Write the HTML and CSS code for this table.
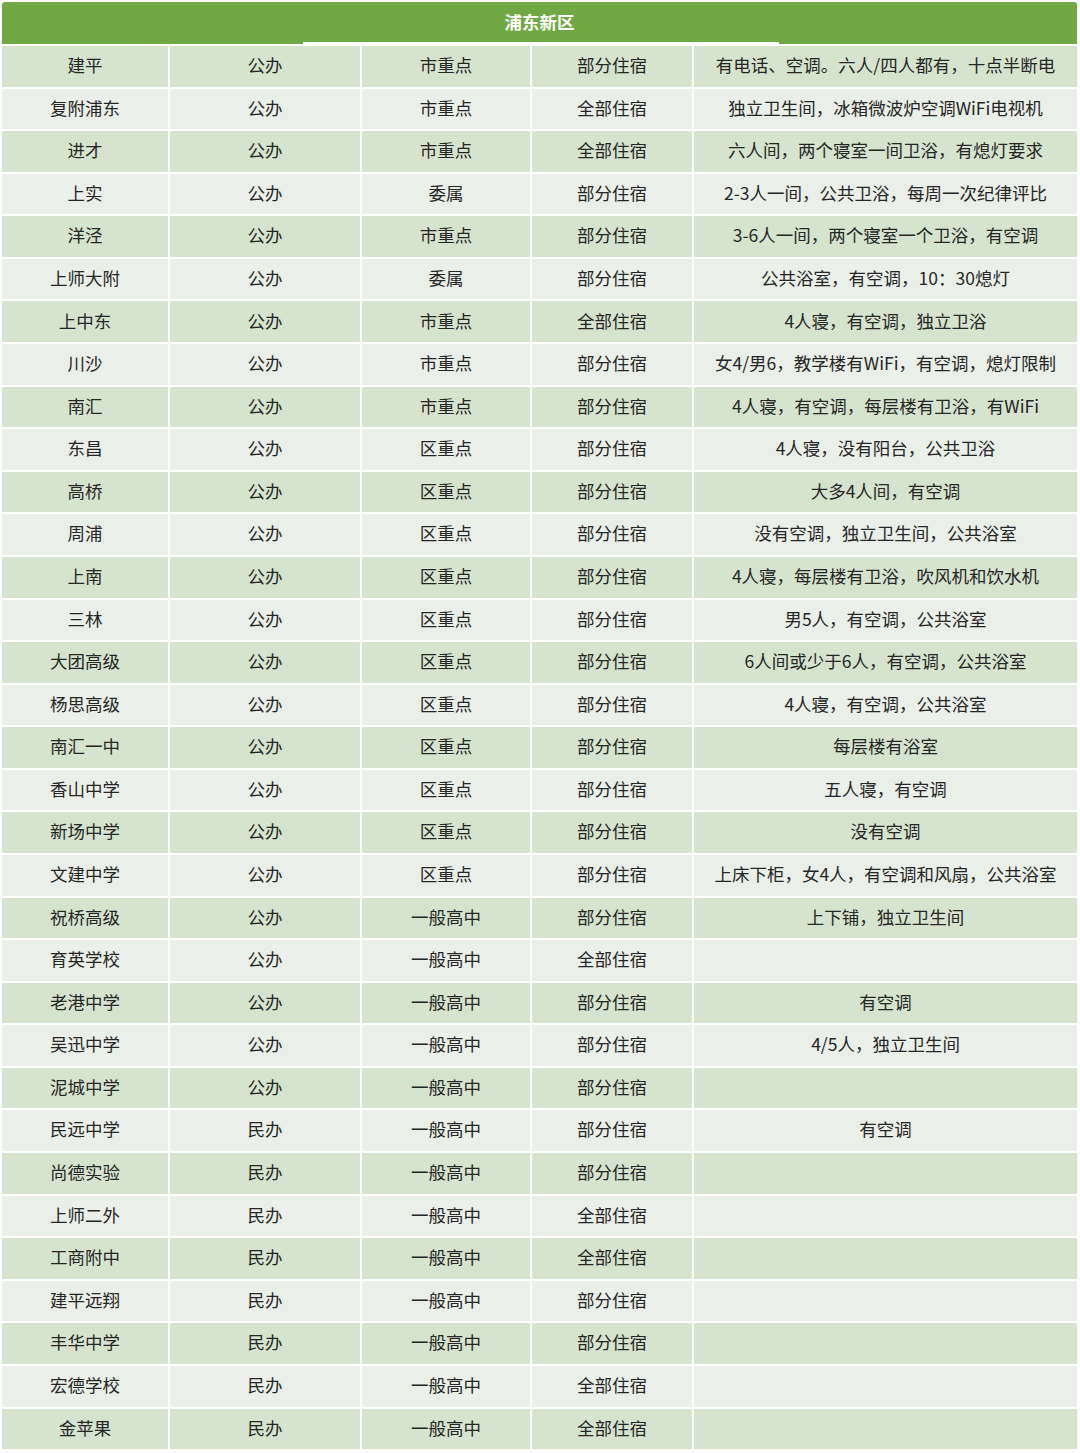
FILE: index.html
```html
<!DOCTYPE html>
<html lang="zh-CN">
<head>
<meta charset="utf-8">
<title>浦东新区</title>
<link rel="stylesheet" href="styles.css">
</head>
<body>
<table class="grid">
  <colgroup>
    <col class="c1"><col class="c2"><col class="c3"><col class="c4"><col class="c5">
  </colgroup>
  <thead>
    <tr><th colspan="5" class="title">浦东新区</th></tr>
  </thead>
  <tbody>
    <tr><td>建平</td><td>公办</td><td>市重点</td><td>部分住宿</td><td>有电话、空调。六人/四人都有，十点半断电</td></tr>
    <tr><td>复附浦东</td><td>公办</td><td>市重点</td><td>全部住宿</td><td>独立卫生间，冰箱微波炉空调WiFi电视机</td></tr>
    <tr><td>进才</td><td>公办</td><td>市重点</td><td>全部住宿</td><td>六人间，两个寝室一间卫浴，有熄灯要求</td></tr>
    <tr><td>上实</td><td>公办</td><td>委属</td><td>部分住宿</td><td>2-3人一间，公共卫浴，每周一次纪律评比</td></tr>
    <tr><td>洋泾</td><td>公办</td><td>市重点</td><td>部分住宿</td><td>3-6人一间，两个寝室一个卫浴，有空调</td></tr>
    <tr><td>上师大附</td><td>公办</td><td>委属</td><td>部分住宿</td><td>公共浴室，有空调，10：30熄灯</td></tr>
    <tr><td>上中东</td><td>公办</td><td>市重点</td><td>全部住宿</td><td>4人寝，有空调，独立卫浴</td></tr>
    <tr><td>川沙</td><td>公办</td><td>市重点</td><td>部分住宿</td><td>女4/男6，教学楼有WiFi，有空调，熄灯限制</td></tr>
    <tr><td>南汇</td><td>公办</td><td>市重点</td><td>部分住宿</td><td>4人寝，有空调，每层楼有卫浴，有WiFi</td></tr>
    <tr><td>东昌</td><td>公办</td><td>区重点</td><td>部分住宿</td><td>4人寝，没有阳台，公共卫浴</td></tr>
    <tr><td>高桥</td><td>公办</td><td>区重点</td><td>部分住宿</td><td>大多4人间，有空调</td></tr>
    <tr><td>周浦</td><td>公办</td><td>区重点</td><td>部分住宿</td><td>没有空调，独立卫生间，公共浴室</td></tr>
    <tr><td>上南</td><td>公办</td><td>区重点</td><td>部分住宿</td><td>4人寝，每层楼有卫浴，吹风机和饮水机</td></tr>
    <tr><td>三林</td><td>公办</td><td>区重点</td><td>部分住宿</td><td>男5人，有空调，公共浴室</td></tr>
    <tr><td>大团高级</td><td>公办</td><td>区重点</td><td>部分住宿</td><td>6人间或少于6人，有空调，公共浴室</td></tr>
    <tr><td>杨思高级</td><td>公办</td><td>区重点</td><td>部分住宿</td><td>4人寝，有空调，公共浴室</td></tr>
    <tr><td>南汇一中</td><td>公办</td><td>区重点</td><td>部分住宿</td><td>每层楼有浴室</td></tr>
    <tr><td>香山中学</td><td>公办</td><td>区重点</td><td>部分住宿</td><td>五人寝，有空调</td></tr>
    <tr><td>新场中学</td><td>公办</td><td>区重点</td><td>部分住宿</td><td>没有空调</td></tr>
    <tr><td>文建中学</td><td>公办</td><td>区重点</td><td>部分住宿</td><td>上床下柜，女4人，有空调和风扇，公共浴室</td></tr>
    <tr><td>祝桥高级</td><td>公办</td><td>一般高中</td><td>部分住宿</td><td>上下铺，独立卫生间</td></tr>
    <tr><td>育英学校</td><td>公办</td><td>一般高中</td><td>全部住宿</td><td></td></tr>
    <tr><td>老港中学</td><td>公办</td><td>一般高中</td><td>部分住宿</td><td>有空调</td></tr>
    <tr><td>吴迅中学</td><td>公办</td><td>一般高中</td><td>部分住宿</td><td>4/5人，独立卫生间</td></tr>
    <tr><td>泥城中学</td><td>公办</td><td>一般高中</td><td>部分住宿</td><td></td></tr>
    <tr><td>民远中学</td><td>民办</td><td>一般高中</td><td>部分住宿</td><td>有空调</td></tr>
    <tr><td>尚德实验</td><td>民办</td><td>一般高中</td><td>部分住宿</td><td></td></tr>
    <tr><td>上师二外</td><td>民办</td><td>一般高中</td><td>全部住宿</td><td></td></tr>
    <tr><td>工商附中</td><td>民办</td><td>一般高中</td><td>全部住宿</td><td></td></tr>
    <tr><td>建平远翔</td><td>民办</td><td>一般高中</td><td>部分住宿</td><td></td></tr>
    <tr><td>丰华中学</td><td>民办</td><td>一般高中</td><td>部分住宿</td><td></td></tr>
    <tr><td>宏德学校</td><td>民办</td><td>一般高中</td><td>全部住宿</td><td></td></tr>
    <tr><td>金苹果</td><td>民办</td><td>一般高中</td><td>全部住宿</td><td></td></tr>
  </tbody>
</table>
</body>
</html>
```
FILE: styles.css
```css
html, body {
  margin: 0;
  padding: 0;
  background: #ffffff;
}
body {
  font-family: "Noto Sans CJK SC", "Noto Sans", sans-serif;
  color: #262626;
}
.grid {
  border-collapse: separate;
  border-spacing: 2px;
  table-layout: fixed;
  width: 1079px;
}
.c1 { width: 166px; }
.c2 { width: 190px; }
.c3 { width: 168px; }
.c4 { width: 160px; }
.c5 { width: 383px; }
.title {
  position: relative;
  height: 42px;
  padding: 0 0 3px 0;
  box-sizing: border-box;
  background: #70a943;
  color: #ffffff;
  font-size: 17.5px;
  font-weight: 700;
  text-align: center;
  vertical-align: middle;
  line-height: 1;
  border-radius: 3px 3px 0 0;
}
.title::after {
  content: "";
  position: absolute;
  left: 301px;
  width: 476px;
  bottom: -1px;
  height: 3px;
  background: #ffffff;
}
.grid td {
  height: 40.58px;
  padding: 0 0 3px 0;
  box-sizing: border-box;
  text-align: center;
  vertical-align: middle;
  font-size: 17.5px;
  line-height: 1;
  white-space: nowrap;
  overflow: hidden;
  background: #d6e3cf;
}
.grid tbody tr:nth-child(even) td {
  background: #ebefe9;
}
```
